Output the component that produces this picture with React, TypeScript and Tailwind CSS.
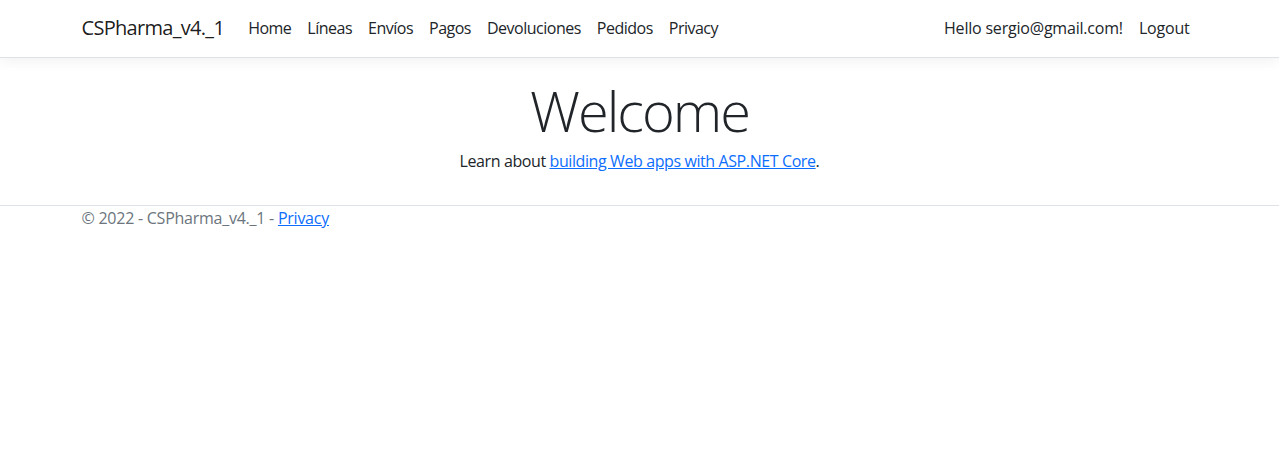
export default function App() {
  const font = { fontFamily: '"Open Sans", "Noto Sans", sans-serif' };
  return (
    <div className="min-h-[467px] bg-white text-[#212529]" style={font}>
      <header>
        <nav className="border-b border-[#dee2e6] bg-white pt-2 pb-[9px] shadow-[0_0.25rem_0.75rem_rgba(0,0,0,0.05)]">
          <div className="mx-auto flex w-[1140px] items-center px-3">
            <a className="mr-4 py-[5px] text-[20px] leading-[30px] tracking-[-0.7px] text-[rgba(0,0,0,0.9)]">CSPharma_v4._1</a>
            <ul className="flex flex-1 text-[16px] leading-6 tracking-[-0.5px]">
              {["Home", "Líneas", "Envíos", "Pagos", "Devoluciones", "Pedidos", "Privacy"].map((t) => (
                <li key={t}>
                  <a className="block px-2 py-2 text-[#212529]">{t}</a>
                </li>
              ))}
            </ul>
            <ul className="flex text-[16px] leading-6 tracking-[-0.2px]">
              <li>
                <span className="block px-2 py-2 text-[#212529]">Hello sergio@gmail.com!</span>
              </li>
              <li>
                <span className="block px-2 py-2 text-[#212529]">Logout</span>
              </li>
            </ul>
          </div>
        </nav>
      </header>
      <div className="mx-auto mt-4 w-[1140px] px-3">
        <main className="pb-4">
          <div className="text-center">
            <h1 className="mb-[5px] pt-[3px] text-[56px] font-light leading-[1.2] tracking-[-2px]">Welcome</h1>
            <p className="mb-4 text-[16px] leading-6 tracking-[-0.4px]">
              Learn about{" "}
              <a className="text-[#0d6efd] underline">building Web apps with ASP.NET Core</a>.
            </p>
          </div>
        </main>
      </div>
      <footer className="border-t border-[#dee2e6] text-[16px] leading-6 tracking-[-0.25px] text-[#6c757d]">
        <div className="mx-auto w-[1140px] px-3">
          © 2022 - CSPharma_v4._1 - <a className="text-[#0d6efd] underline">Privacy</a>
        </div>
      </footer>
    </div>
  );
}
